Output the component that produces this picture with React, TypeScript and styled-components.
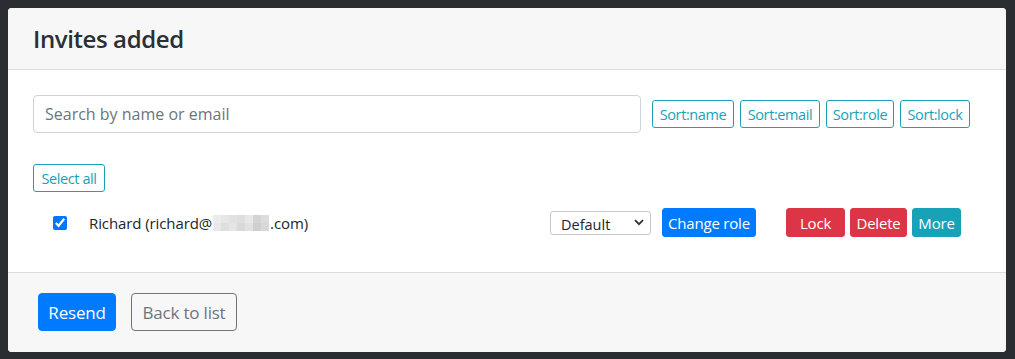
import React from "react";
import styled, { createGlobalStyle } from "styled-components";

const GlobalStyle = createGlobalStyle`
  * {
    box-sizing: border-box;
    margin: 0;
    padding: 0;
  }
  body {
    background: #2a2d31;
    padding: 8px;
    font-family: "Open Sans", "Noto Sans", Arial, sans-serif;
    color: #212529;
  }
`;

const Card = styled.div`
  width: 998px;
  background: #fff;
  border-radius: 4px;
  overflow: hidden;
`;

const Header = styled.div`
  height: 62px;
  padding: 0 25px 1px;
  display: flex;
  align-items: center;
  background: #f7f7f7;
  border-bottom: 1px solid #dcdcdc;
`;

const Title = styled.h3`
  font-size: 24px;
  font-weight: 600;
  color: #2b2f33;
  letter-spacing: -0.4px;
`;

const Body = styled.div`
  padding: 25px 25px 35px;
`;

const SearchRow = styled.div`
  display: flex;
  align-items: center;
  gap: 11px;
  padding-right: 11px;
`;

const SearchInput = styled.input`
  flex: 1;
  height: 38px;
  padding: 0 11px;
  font-family: inherit;
  font-size: 16px;
  color: #495057;
  border: 1px solid #ced4da;
  border-radius: 4px;
  outline: none;
  &::placeholder {
    color: #6c757d;
  }
`;

const SortGroup = styled.div`
  display: flex;
  gap: 6px;
`;

const OutlineInfo = styled.button<{ $w?: number }>`
  height: 28px;
  width: ${(p) => (p.$w ? `${p.$w}px` : "auto")};
  padding: 0 4px;
  background: #fff;
  color: #17a2b8;
  border: 1px solid #17a2b8;
  border-radius: 3px;
  font-family: inherit;
  font-size: 14.5px;
  letter-spacing: -0.4px;
  white-space: nowrap;
`;

const SelectAllRow = styled.div`
  margin-top: 31px;
`;

const InviteRow = styled.div`
  display: flex;
  align-items: center;
  margin-top: 16px;
  padding-left: 20px;
`;

const Check = styled.input`
  width: 14px;
  height: 14px;
  margin-right: 22px;
  accent-color: #0075ff;
`;

const Name = styled.div`
  width: 461px;
  font-size: 15px;
  color: #212529;
  display: flex;
  align-items: center;
  letter-spacing: -0.1px;
`;

const Mosaic = styled.span`
  display: inline-grid;
  grid-template-columns: repeat(7, 8px);
  grid-template-rows: 8px 8px;
  margin: 1px 1px 0;
`;

const Cell = styled.span<{ $c: string }>`
  background: ${(p) => p.$c};
`;

const SelectWrap = styled.div`
  position: relative;
  width: 101px;
  height: 24px;
  margin-right: 11px;
`;

const RoleSelect = styled.select`
  appearance: none;
  width: 100%;
  height: 100%;
  padding: 3px 0 0 10px;
  font-family: inherit;
  font-size: 14.5px;
  color: #212529;
  background: #fff;
  border: 1px solid #c6c9cc;
  border-radius: 3px;
  outline: none;
`;

const Chevron = styled.svg`
  position: absolute;
  right: 7px;
  top: 8px;
  pointer-events: none;
`;

const Solid = styled.button<{ $bg: string; $w?: number }>`
  height: 29px;
  width: ${(p) => (p.$w ? `${p.$w}px` : "auto")};
  padding: 0 4px;
  background: ${(p) => p.$bg};
  color: #fff;
  border: 1px solid ${(p) => p.$bg};
  border-radius: 3px;
  font-family: inherit;
  font-size: 15px;
  letter-spacing: -0.2px;
  white-space: nowrap;
`;

const ActionGroup = styled.div`
  display: flex;
  gap: 5px;
  margin-left: 30px;
`;

const Footer = styled.div`
  display: flex;
  gap: 15px;
  padding: 20px 30px 21px;
  background: #f7f7f7;
  border-top: 1px solid #dcdcdc;
`;

const BigButton = styled.button<{ $outline?: boolean; $w: number }>`
  height: 38px;
  width: ${(p) => p.$w}px;
  font-family: inherit;
  font-size: 17px;
  letter-spacing: -0.2px;
  border-radius: 4px;
  background: ${(p) => (p.$outline ? "transparent" : "#007bff")};
  color: ${(p) => (p.$outline ? "#6c757d" : "#fff")};
  border: 1px solid ${(p) => (p.$outline ? "#6c757d" : "#007bff")};
`;

const mosaic = [
  "#ececec", "#e6e6e6", "#e2e2e2", "#dedede", "#e8e8e8", "#d4d4d4", "#dcdcdc",
  "#e9e9e9", "#dfdfdf", "#e4e4e4", "#d9d9d9", "#e1e1e1", "#cfcfcf", "#d8d8d8",
];

const App: React.FC = () => {
  return (
    <>
      <GlobalStyle />
      <Card>
        <Header>
          <Title>Invites added</Title>
        </Header>
        <Body>
          <SearchRow>
            <SearchInput placeholder="Search by name or email" />
            <SortGroup>
              <OutlineInfo $w={82}>Sort:name</OutlineInfo>
              <OutlineInfo $w={80}>Sort:email</OutlineInfo>
              <OutlineInfo $w={68}>Sort:role</OutlineInfo>
              <OutlineInfo $w={70}>Sort:lock</OutlineInfo>
            </SortGroup>
          </SearchRow>
          <SelectAllRow>
            <OutlineInfo $w={72}>Select all</OutlineInfo>
          </SelectAllRow>
          <InviteRow>
            <Check type="checkbox" defaultChecked />
            <Name>
              Richard (richard@
              <Mosaic>
                {mosaic.map((c, i) => (
                  <Cell key={i} $c={c} />
                ))}
              </Mosaic>
              .com)
            </Name>
            <SelectWrap>
              <RoleSelect defaultValue="Default">
                <option>Default</option>
                <option>Admin</option>
              </RoleSelect>
              <Chevron width="10" height="7" viewBox="0 0 10 7">
                <path d="M1 1.2 L5 5.2 L9 1.2" stroke="#333" strokeWidth="1.8" fill="none" />
              </Chevron>
            </SelectWrap>
            <Solid $bg="#007bff" $w={94}>Change role</Solid>
            <ActionGroup>
              <Solid $bg="#dc3545" $w={59}>Lock</Solid>
              <Solid $bg="#dc3545" $w={57}>Delete</Solid>
              <Solid $bg="#17a2b8" $w={49}>More</Solid>
            </ActionGroup>
          </InviteRow>
        </Body>
        <Footer>
          <BigButton $w={78}>Resend</BigButton>
          <BigButton $outline $w={106}>Back to list</BigButton>
        </Footer>
      </Card>
    </>
  );
};

export default App;
